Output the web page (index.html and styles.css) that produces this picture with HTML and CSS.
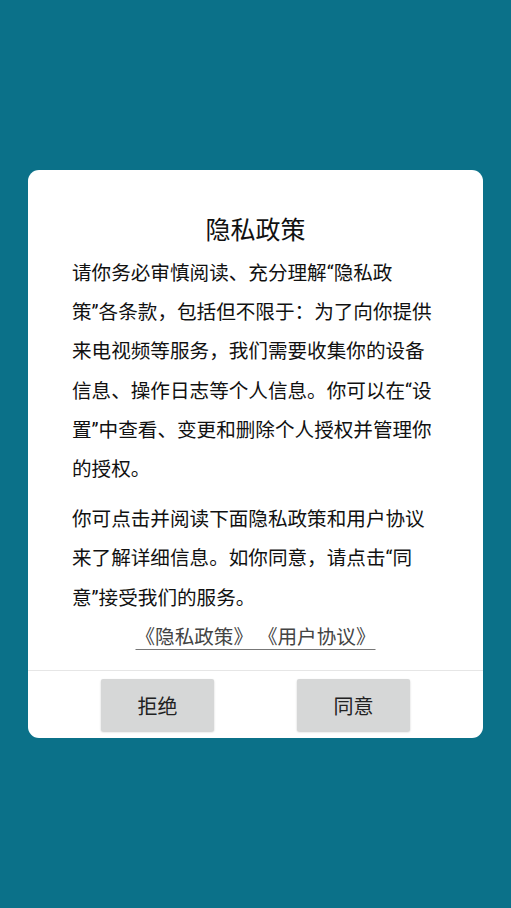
FILE: index.html
```html
<!DOCTYPE html>
<html lang="zh-CN">
<head>
<meta charset="utf-8">
<title>隐私政策</title>
<link rel="stylesheet" href="styles.css">
</head>
<body>
<div class="dialog">
  <h1 class="title">隐私政策</h1>
  <p class="para first">请你务必审慎阅读、充分理解“隐私政<br>策”各条款，包括但不限于：为了向你提供<br>来电视频等服务，我们需要收集你的设备<br>信息、操作日志等个人信息。你可以在“设<br>置”中查看、变更和删除个人授权并管理你<br>的授权。</p>
  <p class="para second">你可点击并阅读下面隐私政策和用户协议<br>来了解详细信息。如你同意，请点击“同<br>意”接受我们的服务。</p>
  <div class="links"><a class="link">《隐私政策》 《用户协议》</a></div>
  <div class="divider"></div>
  <div class="actions">
    <button class="btn">拒绝</button>
    <button class="btn">同意</button>
  </div>
</div>
</body>
</html>
```

FILE: styles.css
```css
html, body {
  margin: 0;
  padding: 0;
  height: 100%;
}
body {
  background: #0b7189;
  font-family: Roboto, "Noto Sans CJK SC", sans-serif;
  color: #111;
  padding-top: 170px;
  box-sizing: border-box;
}
.dialog {
  margin: 0 28px;
  background: #fff;
  border-radius: 11px;
  padding: 44px 0 7px;
}
.title {
  margin: 0;
  text-align: center;
  font-size: 25px;
  font-weight: normal;
  line-height: 34px;
  color: #111;
}
.para {
  margin: 0;
  padding: 0 20px 0 44px;
  font-size: 19.6px;
  line-height: 39.2px;
  white-space: nowrap;
}
.first {
  margin-top: 6px;
}
.second {
  margin-top: 11px;
}
.links {
  text-align: center;
  font-size: 19.6px;
  line-height: 39.2px;
}
.link {
  color: #444;
  text-decoration: underline;
  text-decoration-color: #777;
  text-underline-offset: 5px;
}
.divider {
  height: 1px;
  background: #e6e6e6;
  margin-top: 13px;
}
.actions {
  display: flex;
  justify-content: center;
  gap: 83px;
  margin-top: 8px;
}
.btn {
  width: 113px;
  height: 52px;
  border: none;
  border-radius: 2px;
  background: #d6d7d7;
  box-shadow: 0 1px 2px rgba(0, 0, 0, 0.22);
  font-family: Roboto, "Noto Sans CJK SC", sans-serif;
  font-size: 20px;
  color: #222;
  padding: 0;
}
```
